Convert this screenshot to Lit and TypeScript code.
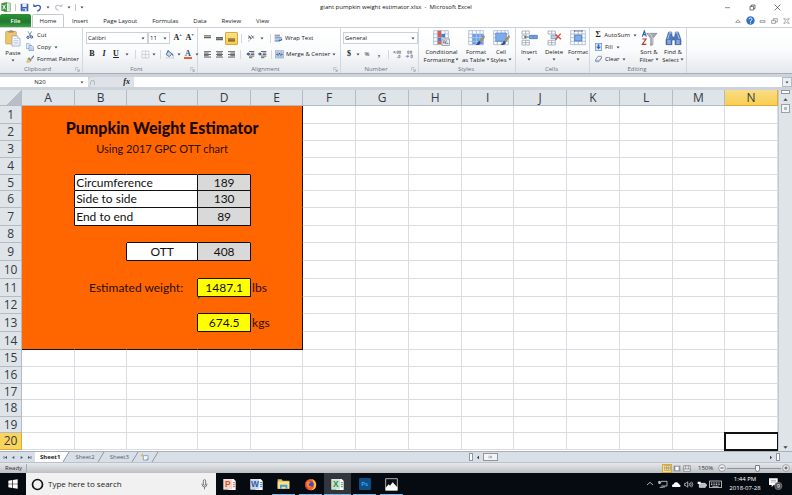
import { LitElement, html, svg, css, nothing, TemplateResult } from "lit";
import { customElement, state } from "lit/decorators.js";
import { classMap } from "lit/directives/class-map.js";

/* Inline icon: every drawing uses three units for one pixel. */
const ico = (w: number, h: number, body: unknown) =>
  html`<svg width=${w} height=${h} viewBox="0 0 ${w * 3} ${h * 3}" aria-hidden="true">${body}</svg>`;

const arrow = html`<svg class="arrow" width="4" height="3" viewBox="0 0 8 6" aria-hidden="true"><path d="M1 1h6L4 5z" fill="#444"/></svg>`;

const tableGrid = svg`<path d="M2 2h44v42H2z" fill="#fff" stroke="#8ea9c8" stroke-width="2"/><path d="M2 12h44M2 23h44M2 34h44M13 2v42M25 2v42M36 2v42" stroke="#8ea9c8" stroke-width="2"/>`;
const brush = svg`<path d="M48 16L34 33l4 4 12-15z" fill="#b9936a" stroke="#6f5a45"/><path d="M34 33c-5 1-4 8-11 11 8 3 15 0 15-7z" fill="#2f4e86"/>`;
const lines = (...ys: [number, number, number][]) =>
  svg`${ys.map(([x, y, w]) => svg`<rect x=${x} y=${y} width=${w} height="2.4" fill="#444"/>`)}`;

const icons = {
  excel: ico(10, 10, svg`<path d="M9 3h19v25H9z" fill="#fff" stroke="#4c9a4c" stroke-width="2"/><path d="M20 9h8M20 15h8M20 21h8" stroke="#6fb06f" stroke-width="2"/><path d="M1 4l17-3v28L1 26z" fill="#3f9a3f"/><path d="M5 9l9 13M14 8L5 22" stroke="#fff" stroke-width="3"/>`),
  save: ico(9, 9, svg`<path d="M2 2h23v23H4l-2-2z" fill="#3d5fae"/><path d="M7 2h13v10H7z" fill="#e8eefa"/><path d="M8 16h12v9H8z" fill="#cfdaf0"/><path d="M10 18h4v6h-4z" fill="#26418a"/>`),
  undo: ico(9, 9, svg`<path d="M7 10c9-6 17-1 15 6-1 4-5 7-9 8" fill="none" stroke="#3a62b5" stroke-width="4"/><path d="M1 12V2l10 10z" fill="#3a62b5"/>`),
  redo: ico(9, 9, svg`<path d="M19 9C10 4 3 9 5 15c1 4 4 6 8 7" fill="none" stroke="#c3c7cd" stroke-width="3.4"/><path d="M25 12V2L15 12z" fill="#c3c7cd"/>`),
  paste: ico(16, 17, svg`<rect x="2" y="4" width="32" height="38" rx="3" fill="#efc46b" stroke="#c79536" stroke-width="2"/><path d="M11 7h14V3h-4q-3-4-6 0h-4z" fill="#8d97a5" stroke="#66707e"/><path d="M21 18h16l8 8v22H21z" fill="#fff" stroke="#7f95b8" stroke-width="2"/><path d="M25 26h10M25 32h16M25 37h16M25 42h16" stroke="#9db5d6" stroke-width="2"/><path d="M37 18v8h8" fill="#dbe6f5" stroke="#7f95b8"/>`),
  cut: ico(8, 8, svg`<path d="M6 1l9 15M17 1L9 16" stroke="#6f7c90" stroke-width="2.4"/><circle cx="6" cy="19" r="3.4" fill="none" stroke="#2b50a8" stroke-width="3"/><circle cx="17" cy="18" r="3.4" fill="none" stroke="#2b50a8" stroke-width="3"/>`),
  copy: ico(8, 8, svg`<path d="M1 2h9l4 4v11H1z" fill="#e6effa" stroke="#5f86c4" stroke-width="1.6"/><path d="M9 8h9l5 5v10H9z" fill="#e6effa" stroke="#3f69b0" stroke-width="1.6"/><path d="M12 14h7M12 17h8M12 20h8" stroke="#5f86c4"/>`),
  painter: ico(8, 8, svg`<path d="M23 1l-8 9 3 3 6-9z" fill="#5a73a8"/><path d="M9 7l9 8-4 4-9-8z" fill="#7c8594"/><path d="M5 11l9 8c-4 4-9 4-13 3 3-3 3-7 4-11z" fill="#edc75f" stroke="#c0973a"/>`),
  borders: ico(9, 9, svg`<path d="M3 3h21v21H3zM13.500 3v21M3 13.500h21" fill="none" stroke="#b2b7be" stroke-width="1.6"/>`),
  bucket: ico(10, 9, svg`<path d="M10 3l11 8-8 9L3 13z" fill="#c9d8ee" stroke="#3d5c92" stroke-width="2.4"/><path d="M8 8V2q3-2 5 2" fill="none" stroke="#3d5c92" stroke-width="2"/><path d="M20 9q7 4 5 12-4-4-5-12z" fill="#2f5fb3"/><path d="M3 22h23v5H3z" fill="#f3f3f3" stroke="#aaa"/>`),
  top: ico(9, 9, svg`<path d="M3 4h21v3H3zM3 8h21v5H3z" fill="#666"/>`),
  middle: ico(9, 9, svg`<path d="M3 9h21v3H3zM3 13h21v6H3z" fill="#666"/>`),
  bottom: ico(9, 9, svg`<path d="M3 13h21v10H3z" fill="#8a7332"/><path d="M3 17h21" stroke="#c9a94a"/>`),
  left: ico(9, 9, lines([3, 4, 21], [3, 8, 14], [3, 12, 21], [3, 16, 14], [3, 20, 21])),
  center: ico(9, 9, lines([3, 4, 21], [6, 8, 15], [3, 12, 21], [6, 16, 15], [3, 20, 21])),
  right: ico(9, 9, lines([3, 4, 21], [10, 8, 14], [3, 12, 21], [10, 16, 14], [3, 20, 21])),
  orient: ico(9, 9, svg`<path d="M3 23L22 5" stroke="#8a8f97" stroke-width="2"/><path d="M4 6q6 0 9 8M3 13q5-5 8 1M13 4l7 9" fill="none" stroke="#444" stroke-width="2.6"/>`),
  outdent: ico(9, 9, svg`${lines([9, 3, 16], [14, 8, 11], [14, 12, 11], [9, 17, 16], [9, 22, 10])}<path d="M1 12l7-6v4h4v4H8v4z" fill="#31599f"/>`),
  indent: ico(9, 9, svg`${lines([9, 3, 16], [14, 8, 11], [14, 12, 11], [9, 17, 16], [9, 22, 10])}<path d="M12 12L5 6v4H1v4h4v4z" fill="#31599f"/>`),
  wrap: ico(9, 9, svg`<path d="M2 3h16v5H2zM2 10h21v6H2zM2 18h13v6H2z" fill="#a8bcd9"/><path d="M2 3h16M2 10h21M2 18h13" stroke="#566d92" stroke-width="1.6"/><path d="M24 13q3 8-6 8v3l-4-5 4-4v3" fill="#3766b3"/>`),
  merge: ico(9, 9, svg`<path d="M1 2h25v22H1z" fill="#c9dbf3" stroke="#7894bf" stroke-width="1.6"/><path d="M1 8h25M1 19h25M9 2v6M18 2v6M9 19v5M18 19v5" stroke="#7894bf"/><path d="M3 13.500l5-4v8zM24 13.500l-5-4v8z" fill="#274a8c"/><path d="M10 17l3.500-8 3.500 8" fill="none" stroke="#333" stroke-width="2"/>`),
  cond: ico(17, 16, svg`${tableGrid}<path d="M14 2h10v10H14zM14 34h10v9H14z" fill="#e4574e"/><path d="M25 12h11v10H25zM14 23h10v10H14z" fill="#4a7cc9"/><path d="M14 12h10v10H14z" fill="#e4574e"/><rect x="27" y="27" width="22" height="19" fill="#e9edf3" stroke="#5b6b82" stroke-width="1.6"/><path d="M30 33h6M40 31l-4 11M40 40h6M30 38h5" stroke="#333" stroke-width="2"/>`),
  fmtTable: ico(17, 16, svg`${tableGrid}<path d="M13 12h33v31H13z" fill="#6fa0e6"/><path d="M13 23h33M13 34h33M25 12v31M36 12v31" stroke="#b9d3f6" stroke-width="2"/>${brush}`),
  cellStyle: ico(17, 16, svg`${tableGrid}<path d="M8 9h32v25H8z" fill="#7eabe9" stroke="#4f7fc4" stroke-width="2"/>${brush}`),
  insert: ico(17, 16, svg`<path d="M3 3h22v9H3zM3 31h22v14H3zM14 3v9M14 31v14M3 38h22" fill="#fff" stroke="#8795a9" stroke-width="2"/><path d="M25 16h24v10H25z" fill="#6f9fe3" stroke="#3d69ab" stroke-width="2"/><path d="M37 16v10" stroke="#3d69ab"/><path d="M3 16h9M3 26h9M3 16v10" stroke="#8795a9" stroke-width="2"/><path d="M23 21H12M16 16l-6 5 6 5" fill="none" stroke="#222" stroke-width="2.4"/>`),
  del: ico(17, 16, svg`<path d="M6 3h22v9H6zM6 31h22v14H6zM17 3v9M17 31v14M6 38h22" fill="#fff" stroke="#8795a9" stroke-width="2"/><path d="M15 16h16v10H15z" fill="#b9cfee" stroke="#6c89b4" stroke-width="2"/><path d="M28 13l17 15M44 11L28 30" stroke="#e0473a" stroke-width="4"/>`),
  format: ico(17, 16, svg`${tableGrid}<path d="M14 15h21v18H14z" fill="#7eabe9" stroke="#3d69ab" stroke-width="2"/><path d="M14 6V1M36 6V1M14 3h22" stroke="#4b5b73" stroke-width="2"/>`),
  fill: ico(7, 8, svg`<rect x="1" y="1" width="19" height="21" fill="#dce8f9" stroke="#5f86c4" stroke-width="2"/><path d="M8 4h5v7h5l-7.500 8L3 11h5z" fill="#2a63c4"/>`),
  clear: ico(7, 8, svg`<path d="M9 4h10l1 5-8 11H2l-1-4z" fill="#f2f5fa" stroke="#5d6f92" stroke-width="2"/><path d="M1 16h11l8-9" fill="none" stroke="#5d6f92" stroke-width="1.6"/>`),
  sort: ico(17, 16, svg`<path d="M4 20L10 3l6 17M6 14h8" fill="none" stroke="#2f5fb3" stroke-width="3.400"/><path d="M4 27h11L4 43h12" fill="none" stroke="#b5392f" stroke-width="3.400"/><path d="M17 10h31L36 25v18l-7 4V25z" fill="#a3a8af" stroke="#6d737c" stroke-width="1.600"/><path d="M21 12h8l5 12v18" fill="none" stroke="#dfe2e6" stroke-width="2"/>`),
  find: ico(17, 16, svg`<path d="M11 6h9l2 15h7l2-15h9l8 24v14H30V30h-9v14H3V30z" fill="#4f7aba" stroke="#2b4a82" stroke-width="1.600"/><path d="M11 6h9v5h-9zM31 6h9v5h-9z" fill="#8fb1e2"/><path d="M7 30h10v12H7zM34 30h10v12H34z" fill="#86a9dd"/><path d="M13 13l-5 14M38 13l5 14" stroke="#c5daf6" stroke-width="2.500"/>`),
  decInc: ico(10, 9, svg`<path d="M2 6h6M5 3L2 6l3 3" fill="none" stroke="#2f5fb3" stroke-width="2"/><path d="M12 3h4v7h-4zM19 3h4v7h-4zM17 16h4v7h-4z" fill="none" stroke="#555" stroke-width="1.600"/><path d="M13 22v2M7 9v2" stroke="#555" stroke-width="2"/>`),
  decDec: ico(10, 9, svg`<path d="M2 19h8M7 15l4 4-4 4" fill="none" stroke="#2f5fb3" stroke-width="2"/><path d="M8 3h4v7H8zM16 3h4v7h-4zM18 15h4v8h-4z" fill="none" stroke="#555" stroke-width="1.600"/>`),
  newSheet: ico(10, 8, svg`<path d="M10 8h14v13H10z" fill="#f4f8ff" stroke="#6885b5" stroke-width="2"/><path d="M17 21l7-7v7z" fill="#8fabd6"/><path d="M7 1l2 4 4 1-4 2-2 4-2-4-4-2 4-1z" fill="#efaa32"/>`),
  launcher: ico(5, 5, svg`<path d="M2 11V2h9" fill="none" stroke="#9aa1aa" stroke-width="1.600"/><path d="M6 6l6 6M13 7v6H7" fill="none" stroke="#8a919b" stroke-width="1.800"/>`),
};

type Cell = { text?: string; span?: number; rows?: number; cls?: string };

const HEIGHTS = [18, 17, 17, 17, 16, 17, 18, 17, 18, 18, 18, 17, 18, 18, 17, 17, 16, 17, 16, 17];
const COLUMNS: [string, number][] = [
  ["A", 53], ["B", 52], ["C", 71], ["D", 53], ["E", 52], ["F", 53], ["G", 53],
  ["H", 53], ["I", 52], ["J", 53], ["K", 53], ["L", 53], ["M", 52], ["N", 53],
];

const plain = (n: number, cls = "o"): Cell[] => Array.from({ length: n }, () => ({ cls }));
const edge: Cell = { cls: "o" };
const entry = (label: string, value: string): Cell[] => [
  { cls: "o" },
  { text: label, span: 2, cls: "w b" },
  { text: value, cls: "g b mid" },
  edge,
];

/* The first five columns of every row of the coloured panel. */
const PANEL: Cell[][] = [
  [{ text: "Pumpkin Weight Estimator", span: 5, rows: 2, cls: "o title" }],
  [],
  [{ text: "Using 2017 GPC OTT chart", span: 5, cls: "o mid sub" }],
  [{ cls: "o" }, ...plain(3, "o b"), edge],
  entry("Circumference", "189"),
  entry("Side to side", "130"),
  entry("End to end", "89"),
  [...plain(2), ...plain(2, "o b"), edge],
  [...plain(2), { text: "OTT", cls: "w b mid" }, { text: "408", cls: "g b mid" }, edge],
  [...plain(3), { cls: "o b" }, edge],
  [{ cls: "o" }, { text: "Estimated weight:", span: 2, cls: "o mid" }, { text: "1487.1", cls: "y b mid" }, { text: "lbs", cls: "o" }],
  [...plain(3), { cls: "o b flag" }, edge],
  [...plain(3), { text: "674.5", cls: "y b mid" }, { text: "kgs", cls: "o" }],
  plain(5, "o b"),
];

@customElement("excel-ribbon")
export class ExcelRibbon extends LitElement {
  static styles = css`
    :host { display: block; font: 6px/8px "Open Sans", sans-serif; color: #222; }
    * { box-sizing: border-box; }
    svg { display: block; flex: none; }
    button, select { font: inherit; color: inherit; background: none; border: 0; padding: 0; margin: 0; }
    .title { height: 14px; display: grid; grid-template-columns: 1fr auto 1fr; align-items: center; background: #fff; color: #111; }
    .quick { display: flex; align-items: center; gap: 4px; padding-left: 1px; }
    .quick .line { width: 1px; height: 7px; background: #c3c7cc; }
    .window { display: flex; justify-content: flex-end; padding-right: 2px; }
    .window button { width: 25px; display: flex; justify-content: center; }
    .tabs { height: 13px; display: flex; align-items: stretch; gap: 1px; background: #fff; }
    .tabs .tab { padding: 0 7px; }
    .tabs .file { width: 31px; background: linear-gradient(#2f9137, #1f7a2b 60%, #3da143); color: #fff; font-weight: 600; border-radius: 2px 2px 0 0; }
    .tabs .home { width: 32px; border: 1px solid #c5cad1; border-bottom: 0; border-radius: 2px 2px 0 0; }
    .tools { margin-left: auto; display: flex; align-items: center; }
    .tools button { width: 12px; display: flex; justify-content: center; }
    .ribbon { display: flex; height: 47px; background: linear-gradient(#fff, #fafbfc 50%, #e4e8ed); border-top: 1px solid #ccd1d7; border-bottom: 1px solid #a9afb7; }
    .group { flex: none; display: flex; flex-direction: column; border-right: 1px solid #d3d8de; padding-top: 1px; }
    .body { height: 36px; display: flex; }
    .name { display: flex; height: 8px; align-items: center; color: #6c737d; padding-right: 2px; }
    .name span { flex: 1; text-align: center; }
    .clip { width: 83px; } .font { width: 115px; } .align { width: 143px; } .num { width: 78px; }
    .styles { width: 97px; } .cells { width: 74px; } .edit { width: 97px; }
    .big { flex: none; display: flex; flex-direction: column; align-items: center; line-height: 7px; gap: 1px; padding-top: 1px; white-space: nowrap; }
    .big svg { margin-bottom: 2px; }
    .big .arrow { display: inline-block; margin: 0 0 1px 1px; }
    .big > .arrow { display: block; margin: 1px 0 0; }
    .w24 { width: 24px; } .w26 { width: 26px; } .w45 { width: 45px; }
    .stack { display: flex; flex-direction: column; }
    .edit .stack { width: 47px; padding-left: 5px; }
    .stack button { height: 12px; display: flex; align-items: center; gap: 3px; white-space: nowrap; }
    .rows { display: flex; flex-direction: column; gap: 4px; padding: 3px 0 0 3px; }
    .num .rows { padding-left: 2px; }
    .row { display: flex; align-items: center; height: 12px; }
    .row button { height: 12px; width: 12px; flex: none; display: flex; align-items: center; justify-content: center; }
    .row .drop { width: 6px; }
    .row .broad { width: 10px; }
    .row .wide { width: auto; gap: 2px; }
    .row .on { background: linear-gradient(#fbe08c, #f8cc4e); border: 1px solid #dba93a; border-radius: 1px; width: 13px; height: 13px; }
    .vline { width: 1px; height: 9px; background: #d3d8de; margin: 0 3px; flex: none; }
    .pick { display: flex; align-items: center; height: 12px; border: 1px solid #ccd1d7; background: #fff; padding: 0 2px 0 1px; }
    .pick select { appearance: none; flex: 1; min-width: 0; height: 10px; outline: 0; }
    .p1 { width: 62px; } .p2 { width: 22px; margin-right: 2px; } .p3 { width: 75px; }
    .serif { font: 700 8px/10px "Liberation Serif", serif; color: #222; }
    .ital { font-style: italic; } .under { text-decoration: underline; }
    .redbar { border-bottom: 2px solid #e8632c; line-height: 7px; padding: 0 1px; color: #2f4e86; }
    .sigma { width: 7px; font: 700 8px/8px "Liberation Serif", serif; }
    .strip { display: flex; align-items: stretch; height: 16px; padding: 3px 0; background: #cdd3da; }
    .nbox { width: 88px; display: flex; align-items: center; background: #fff; padding-right: 4px; }
    .nbox input { flex: 1; min-width: 0; border: 0; padding: 0; text-align: center; font: inherit; color: #111; height: 8px; outline: 0; }
    .fx { width: 46px; display: flex; align-items: center; justify-content: space-between; padding: 0 4px 0 2px; background: #dfe3e8; border-radius: 5px 0 0 5px; font: italic 700 8px/8px "Liberation Serif", serif; }
    .fx i { width: 5px; height: 5px; border-radius: 3px 3px 0 0; border: 1px solid #b4bac2; border-bottom: 0; }
    .formula { flex: 1; min-width: 0; border: 0; padding: 0; background: #fff; outline: 0; border-radius: 0; }
    .more { width: 10px; display: flex; align-items: center; justify-content: center; border: 1px solid #b4bac2; background: #eceff2; }
  `;

  private big(icon: unknown, cls: string, a: string, b?: string) {
    return html`<button class="big ${cls}">${icon}<span>${a}</span>${b ? html`<span>${b}${arrow}</span>` : arrow}</button>`;
  }
  private group(cls: string, name: string, body: TemplateResult, launch = false) {
    return html`<section class="group ${cls}" aria-label=${name}><div class="body">${body}</div><div class="name"><span>${name}</span>${launch ? icons.launcher : nothing}</div></section>`;
  }

  render() {
    return html`
      <header class="title">
        <div class="quick">${icons.excel}<span class="line"></span>${icons.save}${icons.undo}${arrow}${icons.redo}${arrow}<span class="line"></span>${arrow}</div>
        <span>giant pumpkin weight estimator.xlsx &nbsp;- &nbsp;Microsoft Excel</span>
        <div class="window">
          <button aria-label="Minimize">${ico(7, 7, svg`<path d="M3 11h15" stroke="#555" stroke-width="2"/>`)}</button>
          <button aria-label="Restore">${ico(7, 7, svg`<path d="M3 7h11v11H3zM7 7V3h11v11h-4" fill="none" stroke="#333" stroke-width="2"/>`)}</button>
          <button aria-label="Close">${ico(7, 7, svg`<path d="M2 2l17 17M19 2L2 19" stroke="#333" stroke-width="2"/>`)}</button>
        </div>
      </header>
      <nav class="tabs">
        <button class="file">File</button><button class="home">Home</button>
        ${["Insert", "Page Layout", "Formulas", "Data", "Review", "View"].map((t) => html`<button class="tab">${t}</button>`)}
        <div class="tools">
          <button aria-label="Collapse ribbon">${ico(6, 6, svg`<path d="M2 13l7-8 7 8z" fill="none" stroke="#777" stroke-width="2"/>`)}</button>
          <button aria-label="Help">${ico(9, 9, svg`<circle cx="13.500" cy="13.500" r="12.500" fill="#2f6fc9"/><path d="M9 10q0-4 4.500-4t4.500 4q0 3-4.500 5v3M13.500 20v3" fill="none" stroke="#fff" stroke-width="2.800"/>`)}</button>
          <button aria-label="Minimize workbook">${ico(7, 6, svg`<path d="M3 8h15v5H3z" fill="none" stroke="#777" stroke-width="2"/>`)}</button>
          <button aria-label="Restore workbook">${ico(7, 6, svg`<path d="M2 7h11v9H2zM7 7V2h12v10h-6" fill="none" stroke="#777" stroke-width="2"/>`)}</button>
          <button aria-label="Close workbook">${ico(7, 6, svg`<path d="M2 2h5l3.500 4L14 2h5l-6 7 6 7h-5l-3.500-4L7 16H2l6-7z" fill="none" stroke="#777" stroke-width="1.600"/>`)}</button>
        </div>
      </nav>
      <div class="ribbon">
        ${this.group("clip", "Clipboard", html`
          ${this.big(icons.paste, "w26", "Paste")}
          <div class="stack">
            <button>${icons.cut}Cut</button>
            <button>${icons.copy}Copy${arrow}</button>
            <button>${icons.painter}Format Painter</button>
          </div>`, true)}
        ${this.group("font", "Font", html`
          <div class="rows">
            <div class="row">
              <div class="pick p1"><select aria-label="Font"><option>Calibri</option></select>${arrow}</div>
              <div class="pick p2"><select aria-label="Font size"><option>11</option></select>${arrow}</div>
              <button class="serif" aria-label="Grow font">A${ico(3, 8, svg`<path d="M1 5l4-4 4 4z" fill="#2f5fb3"/>`)}</button>
              <button class="serif" aria-label="Shrink font">A${ico(3, 8, svg`<path d="M1 1h8L5 5z" fill="#2f5fb3"/>`)}</button>
            </div>
            <div class="row">
              <button class="serif">B</button><button class="serif ital">I</button><button class="serif under">U</button>
              <button class="broad" aria-label="Underline style">${arrow}</button><span class="vline"></span>
              <button aria-label="Borders">${icons.borders}</button><button class="drop" aria-label="Border style">${arrow}</button><span class="vline"></span>
              <button aria-label="Fill colour">${icons.bucket}</button><button class="drop" aria-label="Fill colours">${arrow}</button>
              <button aria-label="Font colour"><span class="serif redbar">A</span></button><button class="drop" aria-label="Font colours">${arrow}</button>
            </div>
          </div>`, true)}
        ${this.group("align", "Alignment", html`
          <div class="rows">
            <div class="row">
              <button aria-label="Top">${icons.top}</button><button aria-label="Middle">${icons.middle}</button><button class="on" aria-label="Bottom">${icons.bottom}</button>
              <span class="vline"></span><button aria-label="Orientation">${icons.orient}</button><button class="broad" aria-label="Orientation options">${arrow}</button>
              <span class="vline"></span><button class="wide">${icons.wrap}Wrap Text</button>
            </div>
            <div class="row">
              <button aria-label="Left">${icons.left}</button><button aria-label="Centre">${icons.center}</button><button aria-label="Right">${icons.right}</button>
              <span class="vline"></span><button aria-label="Outdent">${icons.outdent}</button><button aria-label="Indent">${icons.indent}</button>
              <span class="vline"></span><button class="wide">${icons.merge}Merge &amp; Center${arrow}</button>
            </div>
          </div>`, true)}
        ${this.group("num", "Number", html`
          <div class="rows">
            <div class="row"><div class="pick p3"><select aria-label="Number format"><option>General</option></select>${arrow}</div></div>
            <div class="row">
              <button class="serif">$</button><button class="drop" aria-label="Currencies">${arrow}</button><button>%</button><button class="serif">,</button>
              <span class="vline"></span><button aria-label="Increase decimals">${icons.decInc}</button><button aria-label="Decrease decimals">${icons.decDec}</button>
            </div>
          </div>`, true)}
        ${this.group("styles", "Styles", html`${this.big(icons.cond, "w45", "Conditional", "Formatting")}${this.big(icons.fmtTable, "w24", "Format", "as Table")}${this.big(icons.cellStyle, "w26", "Cell", "Styles")}`)}
        ${this.group("cells", "Cells", html`${this.big(icons.insert, "w26", "Insert")}${this.big(icons.del, "w24", "Delete")}${this.big(icons.format, "w24", "Format")}`)}
        ${this.group("edit", "Editing", html`
          <div class="stack">
            <button><span class="sigma">Σ</span>AutoSum${arrow}</button>
            <button>${icons.fill}Fill${arrow}</button>
            <button>${icons.clear}Clear${arrow}</button>
          </div>
          ${this.big(icons.sort, "w24", "Sort &", "Filter")}${this.big(icons.find, "w24", "Find &", "Select")}`)}
      </div>
      <div class="strip">
        <div class="nbox"><input aria-label="Name box" value="N20" />${arrow}</div>
        <div class="fx"><i></i><span>fx</span></div>
        <input class="formula" aria-label="Formula" />
        <button class="more" aria-label="Expand formula bar">${arrow}</button>
      </div>`;
  }
}

@customElement("excel-sheet")
export class ExcelSheet extends LitElement {
  @state() private selected = { row: 20, col: "N" };

  static styles = css`
    :host { display: flex; flex: 1; font: 12px/14px Lato, "Open Sans", sans-serif; color: #111; background: #fff; }
    * { box-sizing: border-box; }
    .grid { flex: 1; min-width: 0; }
    table { width: 100%; table-layout: fixed; border-spacing: 0; border-collapse: separate; }
    .corner { width: 22px; }
    th { font: 12px/14px "Open Sans", sans-serif; color: #333a43; padding: 0; background: #dfe4e9; border-right: 1px solid #b4bbc4; border-bottom: 1px solid #b4bbc4; overflow: hidden; }
    thead th { height: 16px; }
    th.sel { background: #fbd45b; border-color: #e0a93a; }
    thead th.sel { background: linear-gradient(#f8dc88, #f9cf4f); }
    .all { background: linear-gradient(135deg, #dfe4e9 60%, #b7bec7 60%); }
    td { padding: 0 1px; border-right: 1px solid #d9dde1; border-bottom: 1px solid #d9dde1; white-space: nowrap; overflow: hidden; line-height: 14px; }
    .o { background: #ff6600; border-color: #ff6600; color: #2b0f00; }
    .w { background: #fff; } .g { background: #d9d9d9; } .y { background: #ffff00; }
    .r1 { border-right-color: #111; } .b { border-bottom-color: #111; }
    .mid { text-align: center; }
    .sub { font-size: 11px; }
    .title { text-align: center; vertical-align: bottom; font: 900 16px/24px Lato, sans-serif; color: #1a0900; }
    .flag { background: linear-gradient(135deg, #18852c 2px, transparent 2px) #ff6600; }
    .pickd { outline: 2px solid #111; outline-offset: -1px; border-color: #fff; }
    .scroll { flex: none; width: 14px; display: flex; flex-direction: column; align-items: center; background: #dfe4e9; border-left: 1px solid #c4cad1; gap: 1px; }
    .split { width: 9px; height: 4px; border: 1px solid #8f96a0; background: #fff; }
    .scroll button { width: 11px; height: 8px; padding: 0; border: 0; background: none; display: flex; align-items: center; justify-content: center; }
    .thumb { width: 9px; height: 9px; border: 1px solid #9aa1ab; background: #b3bac3; box-shadow: inset 0 0 0 2px #f2f4f6; }
    .space { flex: 1; }
  `;

  private cell(c: Cell, edges: string) {
    return html`<td class="${c.cls ?? ""} ${edges}" colspan=${c.span ?? 1} rowspan=${c.rows ?? 1}>${c.text ?? nothing}</td>`;
  }

  private row(height: number, i: number) {
    const panel = PANEL[i];
    const used = panel ? 5 : 0;
    const sel = this.selected.row === i + 1;
    return html`<tr style="height:${height}px">
      <th scope="row" class=${classMap({ sel })}>${i + 1}</th>
      ${panel?.map((c, k) => {
        const last = k === panel.length - 1;
        const framed = /\b[wgy]\b/.test(c.cls ?? "");
        const next = /\b[wgy]\b/.test(panel[k + 1]?.cls ?? "");
        return this.cell(c, last || framed || next ? "r1" : "");
      })}
      ${COLUMNS.slice(used).map(([name]) => html`<td class=${classMap({ pickd: sel && name === this.selected.col })}></td>`)}
    </tr>`;
  }

  render() {
    return html`
      <div class="grid">
        <table>
          <colgroup><col class="corner" />${COLUMNS.map(([, w]) => html`<col style="width:${(w / 7.78).toFixed(3)}%" />`)}</colgroup>
          <thead><tr><th class="all"></th>${COLUMNS.map(([n]) => html`<th scope="col" class=${classMap({ sel: n === this.selected.col })}>${n}</th>`)}</tr></thead>
          <tbody>${HEIGHTS.map((h, i) => this.row(h, i))}</tbody>
        </table>
      </div>
      <div class="scroll">
        <span class="split"></span>
        <button aria-label="Scroll up">${ico(5, 3, svg`<path d="M1 8l6.500-7L14 8z" fill="#444"/>`)}</button>
        <span class="thumb"></span><span class="space"></span>
        <button aria-label="Scroll down">${ico(5, 3, svg`<path d="M1 1h13L7.500 8z" fill="#444"/>`)}</button>
      </div>`;
  }
}

@customElement("excel-footer")
export class ExcelFooter extends LitElement {
  static styles = css`
    :host { display: block; font: 6px/8px "Open Sans", sans-serif; color: #333; }
    * { box-sizing: border-box; }
    svg { display: block; flex: none; }
    button { font: inherit; color: inherit; background: none; border: 0; padding: 0; }
    .tabs { display: flex; align-items: stretch; height: 11px; background: #d9dfe7; border-top: 1px solid #a9b0ba; }
    .nav { display: flex; align-items: center; width: 35px; padding-left: 1px; }
    .nav button { width: 8px; display: flex; justify-content: center; }
    .sheet { display: flex; align-items: center; padding: 0 2px 0 5px; color: #555d68; }
    .fresh { padding: 0 1px; }
    .active { background: #fff; font-weight: 700; color: #222; }
    .hscroll { flex: 1; display: flex; align-items: center; gap: 3px; padding-right: 12px; }
    .left { flex: 393; } .right { flex: 338; }
    .grip { width: 4px; height: 8px; border: 1px solid #8f96a0; background: #fff; }
    .thumb { width: 15px; height: 8px; border: 1px solid #8f96a0; background: #f2f4f6; display: grid; place-items: center; }
    .status { display: flex; align-items: center; height: 11px; padding: 0 2px 0 5px; border-top: 1px solid #bcc2c9; background: linear-gradient(#e6e8eb, #bcc0c5); }
    .ready { width: 22px; border-right: 1px solid #a6abb2; }
    .views { display: flex; margin-left: auto; padding-right: 6px; }
    .views button { width: 10px; height: 9px; display: grid; place-items: center; }
    .views .on { background: #fbdc79; border: 1px solid #dba93a; }
    .zoom { display: flex; align-items: center; gap: 1px; }
    .pct { width: 20px; }
    input { appearance: none; width: 54px; height: 9px; margin: 0; background: linear-gradient(#8d939b, #8d939b) center / 100% 1px no-repeat; }
    input::-webkit-slider-thumb { appearance: none; width: 5px; height: 7px; background: #f4f6f8; border: 1px solid #777e88; border-radius: 0 0 3px 3px; }
  `;

  private nav(label: string, d: string) {
    return html`<button aria-label=${label}>${ico(5, 5, svg`<path d=${d} fill="#3d5173"/>`)}</button>`;
  }

  render() {
    const slash = html`<svg width="8" height="10" viewBox="0 0 8 10" aria-hidden="true"><path d="M1 10L7 0" stroke="#8f97a3"/></svg>`;
    const slope = html`<svg width="8" height="10" viewBox="0 0 8 10" aria-hidden="true"><path d="M0 0h7L1 10H0z" fill="#fff"/><path d="M1 10L7 0" stroke="#8f97a3"/></svg>`;
    return html`
      <div class="tabs">
        <div class="nav">
          ${this.nav("First sheet", "M2 3h2v9H2zM12 3v9L5 7.500z")}${this.nav("Previous sheet", "M10 3v9L3 7.500z")}
          ${this.nav("Next sheet", "M5 3v9l7-4.500z")}${this.nav("Last sheet", "M11 3h2v9h-2zM3 3v9l7-4.500z")}
        </div>
        <button class="sheet active">Sheet1</button>${slope}
        <button class="sheet">Sheet2</button>${slash}
        <button class="sheet">Sheet3</button>${slash}
        <button class="sheet fresh" aria-label="Insert sheet">${icons.newSheet}</button>${slash}
        <div class="hscroll">
          <span class="left"></span><span class="grip"></span>
          ${ico(4, 5, svg`<path d="M9 2v11L3 7.500z" fill="#333"/>`)}
          <span class="thumb">${ico(5, 4, svg`<path d="M2 2h2v8H2zM6 2h2v8H6zM10 2h2v8h-2z" fill="#8f96a0"/>`)}</span>
          <span class="right"></span>
          ${ico(4, 5, svg`<path d="M3 2v11l6-5.500z" fill="#333"/>`)}<span class="grip"></span>
        </div>
      </div>
      <div class="status">
        <span class="ready">Ready</span>
        <div class="views">
          <button class="on" aria-label="Normal">${ico(7, 6, svg`<path d="M2 2h17v14H2zM2 7h17M2 11h17M8 2v14M13 2v14" fill="#fff" stroke="#8a7332" stroke-width="1.500"/>`)}</button>
          <button aria-label="Page layout">${ico(8, 7, svg`<path d="M2 2h20v17H2z" fill="#8a9099"/><path d="M7 5h10v11H7z" fill="#fff"/>`)}</button>
          <button aria-label="Page break">${ico(8, 7, svg`<path d="M2 2h20v17H2z" fill="#eee" stroke="#777" stroke-width="2"/><path d="M8 2v10h8V2M2 12h6M16 12h6" fill="none" stroke="#777" stroke-width="2"/>`)}</button>
        </div>
        <label class="pct" for="zoom">150%</label>
        <div class="zoom">
          <button aria-label="Zoom out">${ico(8, 8, svg`<circle cx="12" cy="12" r="10" fill="#f2f4f6" stroke="#777e88" stroke-width="2"/><path d="M7 12h10" stroke="#333" stroke-width="2.500"/>`)}</button>
          <input id="zoom" type="range" min="0" max="100" value="58" />
          <button aria-label="Zoom in">${ico(8, 8, svg`<circle cx="12" cy="12" r="10" fill="#f2f4f6" stroke="#777e88" stroke-width="2"/><path d="M7 12h10M12 7v10" stroke="#333" stroke-width="2.500"/>`)}</button>
        </div>
      </div>`;
  }
}

const office = (letter: string, colour: string) => html`<svg width="13" height="13" viewBox="0 0 39 39" aria-hidden="true">
  <path d="M16 3h16l6 6v27H16z" fill="#fff"/><path d="M29 14h7M29 20h7M29 26h7" stroke=${colour} stroke-width="2.500"/>
  <path d="M1 3h27v32H1z" fill="#fff"/><path d="M2 4h25v30H2z" fill=${colour} opacity=".25"/>
  <text x="14.500" y="28" text-anchor="middle" font-family="Liberation Sans" font-weight="700" font-size="25" fill=${colour}>${letter}</text></svg>`;

@customElement("task-bar")
export class TaskBar extends LitElement {
  static styles = css`
    :host { display: flex; height: 22px; background: #060b12; color: #fff; font: 6px/9px "Open Sans", sans-serif; }
    * { box-sizing: border-box; }
    svg { display: block; flex: none; }
    button { font: inherit; color: inherit; background: none; border: 0; padding: 0; display: grid; place-items: center; }
    .start { width: 26px; }
    .search { width: 190px; display: flex; align-items: center; gap: 4px; padding: 0 8px 0 5px; background: #f1f1f1; }
    .search input { flex: 1; min-width: 0; border: 0; padding: 0; background: none; outline: 0; height: 14px; font: 8px/14px "Open Sans", sans-serif; color: #222; }
    .search input::placeholder { color: #222; opacity: 1; }
    .app { width: 27px; padding-top: 1px; border-bottom: 1px solid transparent; }
    .open { border-bottom-color: #76b9ed; margin: 0 2px; width: 23px; }
    .current { background: #30363c; border-bottom-color: #76b9ed; }
    .tray { margin-left: auto; display: flex; align-items: center; gap: 2px; padding-right: 9px; }
    .clock { width: 42px; text-align: center; white-space: nowrap; }
    .tray button { min-width: 11px; }
  `;

  render() {
    const w = "#fff";
    return html`
      <button class="start" aria-label="Start">${ico(10, 10, svg`<path d="M1 5l12-2v11H1zM15 3l14-2v13H15zM1 16h12v11L1 25zM15 16h14v13l-14-2z" fill="#fff"/>`)}</button>
      <label class="search">
        ${ico(13, 13, svg`<circle cx="19.500" cy="19.500" r="15" fill="none" stroke="#111" stroke-width="5"/>`)}
        <input placeholder="Type here to search" aria-label="Search" />
        ${ico(7, 11, svg`<rect x="7" y="2" width="7" height="17" rx="3.500" fill="none" stroke="#444" stroke-width="2"/><path d="M3 14q0 10 7.500 10T18 14M10.500 24v7" fill="none" stroke="#444" stroke-width="2"/>`)}
      </label>
      <button class="app" aria-label="PowerPoint">${office("P", "#d9532c")}</button>
      <button class="app" aria-label="Word">${office("W", "#2a5db0")}</button>
      <button class="app open" aria-label="File Explorer">${ico(13, 12, svg`<path d="M2 4h12l3 4h20v24H2z" fill="#e6bd52"/><path d="M2 11h35v21H2z" fill="#f9e08f"/><path d="M9 20h22v12h-5v-6H14v6H9z" fill="#3f9ddb"/>`)}</button>
      <button class="app open" aria-label="Firefox">${ico(13, 13, svg`<circle cx="20" cy="20" r="17" fill="#f4632b"/><path d="M24 3q12 5 12 17 0 15-15 17Q33 29 30 18q-2-7-6-15z" fill="#ffc629"/><path d="M4 12q2 18 13 23-9 2-13-9-2-7 0-14z" fill="#d72c5c"/><circle cx="20" cy="19" r="8.500" fill="#4a48b5"/><path d="M10 12q7-3 10 3-7 0-6 6 3 6 10 2-3 7-10 5-8-5-4-16z" fill="#fb8a2e"/>`)}</button>
      <button class="app current" aria-label="Excel">${office("X", "#2f8a41")}</button>
      <button class="app open" aria-label="Photoshop"><svg width="12" height="12" viewBox="0 0 36 36" aria-hidden="true"><rect x="1" y="1" width="34" height="34" fill="#0b72b8"/><rect x="3" y="3" width="30" height="30" fill="#0a4f8c"/><text x="7" y="24" font-family="Open Sans" font-size="18" fill="#6cc6ff">Ps</text></svg></button>
      <button class="app open" aria-label="Photos">${ico(13, 13, svg`<path d="M2 2h35v35H2z" fill="#0b0f15" stroke="#fff" stroke-width="2"/><path d="M2 29l9-10 4 4 8-10 14 15v9H2z" fill="#fff"/>`)}</button>
      <div class="tray">
        <button aria-label="Hidden icons">${ico(8, 8, svg`<path d="M3 15l9-8 9 8" fill="none" stroke=${w} stroke-width="2"/>`)}</button>
        <button aria-label="Display">${ico(10, 9, svg`<path d="M9 4h18v14H10M5 22h10M18 18v6M4 3v8M2 5h6v5H2z" fill="none" stroke=${w} stroke-width="2"/>`)}</button>
        <button aria-label="OneDrive">${ico(10, 9, svg`<path d="M4 21q-3-7 4-8 2-8 9-6 6 1 7 6 6 1 4 8z" fill=${w}/>`)}</button>
        <button aria-label="Volume">${ico(10, 9, svg`<path d="M2 10h4l5-5v17l-5-5H2zM15 9q3 4 0 9M19 7q5 6 0 13M23 5q7 8 0 17" fill="none" stroke=${w} stroke-width="1.800"/>`)}</button>
        <button aria-label="Battery">${ico(10, 9, svg`<path d="M7 10h18v12H7z" fill="#bbb" stroke=${w} stroke-width="2"/><path d="M26 13h3v6h-3zM2 5h9v7H2z" fill=${w}/>`)}</button>
        <button aria-label="Keyboard">${ico(13, 9, svg`<rect x="2" y="3" width="35" height="20" fill="none" stroke=${w} stroke-width="2"/><path d="M6 9h27M6 14h27" stroke=${w} stroke-width="2.500" stroke-dasharray="3 2"/><path d="M10 19h19" stroke=${w} stroke-width="2"/>`)}</button>
        <div class="clock">1:44 PM<br />2018-07-28</div>
        <button aria-label="Notifications"><svg width="15" height="14" viewBox="0 0 45 42" aria-hidden="true"><path d="M3 4h26v20H17l-6 6v-6H3z" fill="#fff"/><path d="M8 10h16M8 15h16" stroke="#888" stroke-width="2"/><circle cx="31" cy="27" r="11" fill="#4a4f56" stroke="#999" stroke-width="1.500"/><text x="26" y="33" font-family="Open Sans" font-size="17" fill="#fff">9</text></svg></button>
      </div>`;
  }
}

@customElement("app-root")
export class AppRoot extends LitElement {
  static styles = css`
    :host { display: flex; flex-direction: column; min-height: 100vh; background: #fff; }
  `;
  render() {
    return html`<excel-ribbon></excel-ribbon><excel-sheet></excel-sheet><excel-footer></excel-footer><task-bar></task-bar>`;
  }
}
